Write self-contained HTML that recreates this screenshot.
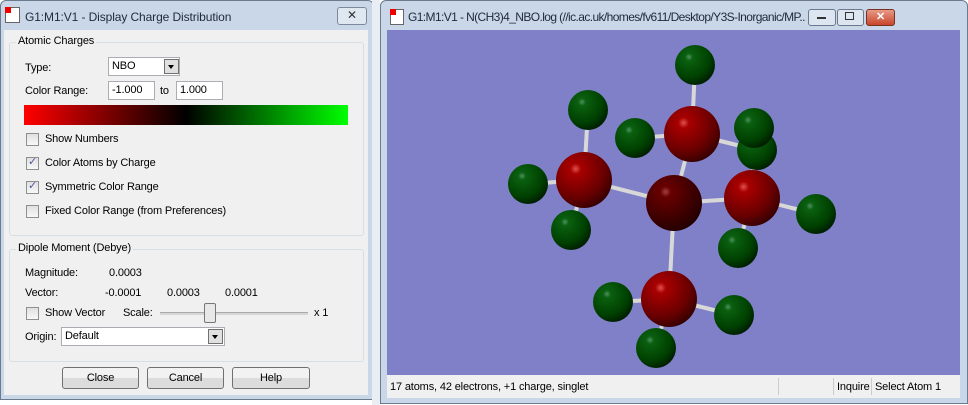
<!DOCTYPE html>
<html><head><style>
body{margin:0;width:968px;height:405px;overflow:hidden;background:#fff;font-family:"Liberation Sans",sans-serif;font-size:11px;letter-spacing:-0.15px;color:#000;position:relative}
.abs{position:absolute;white-space:nowrap}
.frame{background:#c9d7e8;border:1px solid #6b7b8e;border-radius:6px 6px 0 0}
.title{font-size:12px;letter-spacing:-0.1px;color:#1e2a3a}
.body{background:#f0f0f0}
.grp{position:absolute;border:1px solid #d5dfe5;border-radius:3px}
.grp span{position:absolute;top:-8px;left:6px;background:#f0f0f0;padding:0 2px}
.cb{position:absolute;width:11px;height:11px;border:1px solid #8e8f8f;background:linear-gradient(#e0e0e0,#f8f8f8)}
.inp{position:absolute;background:#fff;border:1px solid #abadb3;height:17px;line-height:17px;padding-left:3px;box-sizing:border-box}
.btn{position:absolute;height:22px;border:1px solid #707070;border-radius:3px;background:linear-gradient(#f2f2f2 50%,#dcdcdc 50%);text-align:center;line-height:20px;box-sizing:border-box}
.dd{position:absolute;width:15px;height:15px;border:1px solid #707070;background:#e0e0e0;box-sizing:border-box}
.dd:after{content:"";position:absolute;left:3px;top:5px;border:3px solid transparent;border-top:4px solid #000}
</style></head><body>
<div class="abs frame" style="left:0;top:0;width:372px;height:398px"></div>
<div class="abs" style="left:5px;top:7px;width:13px;height:14px;background:#fff;border:1px solid #666"></div>
<div class="abs" style="left:5px;top:7px;width:6px;height:6px;background:#e00"></div>
<div class="abs title" style="left:25px;top:10px">G1:M1:V1 - Display Charge Distribution</div>
<div class="abs" style="left:337px;top:7px;width:28px;height:16px;border:1px solid #7a8a9a;border-radius:3px;background:#dfe7f0;text-align:center;line-height:15px;font-size:12px;color:#333">✕</div>
<div class="abs body" style="left:4px;top:30px;width:364px;height:365px"></div>
<div class="grp" style="left:9px;top:42px;width:353px;height:192px"><span>Atomic Charges</span></div>
<div class="abs" style="left:25px;top:62px">Type:</div>
<div class="inp" style="left:108px;top:57px;width:72px;height:19px">NBO</div>
<div class="dd" style="left:164px;top:59px"></div>
<div class="abs" style="left:25px;top:85px">Color Range:</div>
<div class="inp" style="left:108px;top:81px;width:47px;height:19px">-1.000</div>
<div class="abs" style="left:160px;top:85px">to</div>
<div class="inp" style="left:176px;top:81px;width:47px;height:19px">1.000</div>
<div class="abs" style="left:24px;top:105px;width:324px;height:20px;background:linear-gradient(90deg,#ff0000,#000 50%,#00ff00)"></div>
<div class="cb" style="left:26px;top:133px"></div><div class="abs" style="left:45px;top:133px">Show Numbers</div>
<div class="cb" style="left:26px;top:157px"></div><div class="abs" style="left:28px;top:155px;color:#4a5a9a">✓</div><div class="abs" style="left:45px;top:157px">Color Atoms by Charge</div>
<div class="cb" style="left:26px;top:181px"></div><div class="abs" style="left:28px;top:179px;color:#4a5a9a">✓</div><div class="abs" style="left:45px;top:181px">Symmetric Color Range</div>
<div class="cb" style="left:26px;top:205px"></div><div class="abs" style="left:45px;top:205px">Fixed Color Range (from Preferences)</div>
<div class="grp" style="left:9px;top:249px;width:353px;height:111px"><span>Dipole Moment (Debye)</span></div>
<div class="abs" style="left:25px;top:267px">Magnitude:</div><div class="abs" style="left:109px;top:267px">0.0003</div>
<div class="abs" style="left:25px;top:287px">Vector:</div><div class="abs" style="left:105px;top:287px">-0.0001</div><div class="abs" style="left:167px;top:287px">0.0003</div><div class="abs" style="left:225px;top:287px">0.0001</div>
<div class="cb" style="left:26px;top:307px"></div><div class="abs" style="left:45px;top:307px">Show Vector</div>
<div class="abs" style="left:123px;top:307px">Scale:</div>
<div class="abs" style="left:160px;top:312px;width:148px;height:2px;background:#d6d6d6;border-top:1px solid #aaa"></div>
<div class="abs" style="left:204px;top:303px;width:10px;height:18px;border:1px solid #777;border-radius:2px;background:#e8e8e8"></div>
<div class="abs" style="left:314px;top:307px">x 1</div>
<div class="abs" style="left:25px;top:331px">Origin:</div>
<div class="inp" style="left:61px;top:327px;width:164px;height:19px">Default</div>
<div class="dd" style="left:208px;top:329px"></div>
<div class="btn" style="left:62px;top:367px;width:77px">Close</div>
<div class="btn" style="left:147px;top:367px;width:77px">Cancel</div>
<div class="btn" style="left:232px;top:367px;width:78px">Help</div>
<div class="abs" style="left:372px;top:0;width:8px;height:405px;background:#e8eef4"></div>
<div class="abs frame" style="left:380px;top:0;width:586px;height:402px"></div>
<div class="abs" style="left:390px;top:9px;width:12px;height:14px;background:#fff;border:1px solid #666"></div>
<div class="abs" style="left:390px;top:9px;width:6px;height:6px;background:#e00"></div>
<div class="abs title" style="left:408px;top:10px;width:398px;overflow:hidden;letter-spacing:-0.6px">G1:M1:V1 - N(CH3)4_NBO.log (//ic.ac.uk/homes/fv611/Desktop/Y3S-Inorganic/MP...</div>
<div class="abs" style="left:808px;top:9px;width:26px;height:15px;border:1px solid #6a7a8a;border-radius:3px;background:#dde6f0"></div>
<div class="abs" style="left:817px;top:17px;width:9px;height:2px;background:#333"></div>
<div class="abs" style="left:837px;top:9px;width:25px;height:15px;border:1px solid #6a7a8a;border-radius:3px;background:#dde6f0"></div>
<div class="abs" style="left:845px;top:12px;width:7px;height:6px;border:1px solid #333"></div>
<div class="abs" style="left:866px;top:9px;width:27px;height:15px;border:1px solid #7a3020;border-radius:3px;background:linear-gradient(#e89a86,#c8452c);color:#fff;text-align:center;line-height:15px;font-weight:bold">✕</div>
<div class="abs" style="left:387px;top:30px;width:573px;height:345px;background:#8080c8">
<svg width="573" height="345" viewBox="387 30 573 345">
<defs>
<radialGradient id="r" cx="0.35" cy="0.3" r="0.8"><stop offset="0" stop-color="#e05050"/><stop offset="0.12" stop-color="#a80000"/><stop offset="0.65" stop-color="#680000"/><stop offset="1" stop-color="#280000"/></radialGradient>
<radialGradient id="n" cx="0.35" cy="0.3" r="0.8"><stop offset="0" stop-color="#a04040"/><stop offset="0.12" stop-color="#680000"/><stop offset="1" stop-color="#1c0000"/></radialGradient>
<radialGradient id="g" cx="0.35" cy="0.3" r="0.8"><stop offset="0" stop-color="#509060"/><stop offset="0.12" stop-color="#0a6010"/><stop offset="0.65" stop-color="#004000"/><stop offset="1" stop-color="#001400"/></radialGradient>
</defs>
<g stroke="#d8d8d8" stroke-width="4">
<line x1="674" y1="203" x2="584" y2="180"/><line x1="674" y1="203" x2="692" y2="134"/><line x1="674" y1="203" x2="752" y2="198"/><line x1="674" y1="203" x2="669" y2="299"/>
<line x1="692" y1="134" x2="695" y2="65"/><line x1="692" y1="134" x2="635" y2="138"/><line x1="692" y1="134" x2="757" y2="150"/>
<line x1="584" y1="180" x2="588" y2="110"/><line x1="584" y1="180" x2="528" y2="184"/><line x1="584" y1="180" x2="571" y2="230"/>
<line x1="752" y1="198" x2="754" y2="128"/><line x1="752" y1="198" x2="816" y2="214"/><line x1="752" y1="198" x2="738" y2="248"/>
<line x1="669" y1="299" x2="613" y2="302"/><line x1="669" y1="299" x2="734" y2="315"/><line x1="669" y1="299" x2="656" y2="348"/>
</g>
<circle cx="757" cy="150" r="20" fill="url(#g)"/>
<circle cx="695" cy="65" r="20" fill="url(#g)"/>
<circle cx="588" cy="110" r="20" fill="url(#g)"/>
<circle cx="635" cy="138" r="20" fill="url(#g)"/>
<circle cx="692" cy="134" r="28" fill="url(#r)"/>
<circle cx="754" cy="128" r="20" fill="url(#g)"/>
<circle cx="528" cy="184" r="20" fill="url(#g)"/>
<circle cx="584" cy="180" r="28" fill="url(#r)"/>
<circle cx="571" cy="230" r="20" fill="url(#g)"/>
<circle cx="674" cy="203" r="28" fill="url(#n)"/>
<circle cx="816" cy="214" r="20" fill="url(#g)"/>
<circle cx="752" cy="198" r="28" fill="url(#r)"/>
<circle cx="738" cy="248" r="20" fill="url(#g)"/>
<circle cx="613" cy="302" r="20" fill="url(#g)"/>
<circle cx="734" cy="315" r="20" fill="url(#g)"/>
<circle cx="669" cy="299" r="28" fill="url(#r)"/>
<circle cx="656" cy="348" r="20" fill="url(#g)"/>
</svg></div>
<div class="abs body" style="left:387px;top:375px;width:573px;height:23px"></div>
<div class="abs" style="left:390px;top:381px">17 atoms, 42 electrons, +1 charge, singlet</div>
<div class="abs" style="left:778px;top:378px;width:1px;height:17px;background:#ccc"></div>
<div class="abs" style="left:833px;top:378px;width:1px;height:17px;background:#ccc"></div>
<div class="abs" style="left:837px;top:381px">Inquire</div>
<div class="abs" style="left:871px;top:378px;width:1px;height:17px;background:#ccc"></div>
<div class="abs" style="left:875px;top:381px">Select Atom 1</div>
</body></html>
